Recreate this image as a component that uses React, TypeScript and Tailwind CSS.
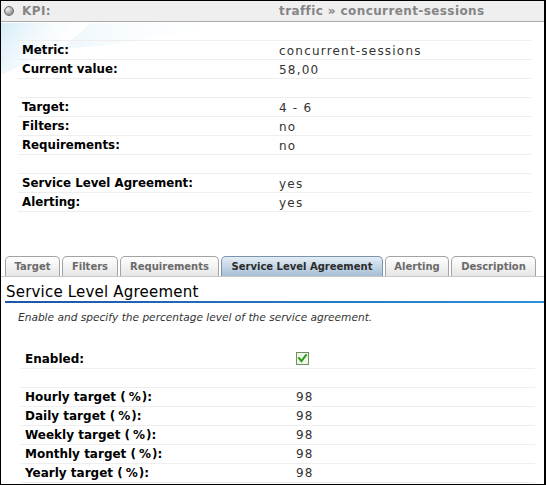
import React from "react";

const font = { fontFamily: '"DejaVu Sans", Verdana, sans-serif' };

const topRows: ([string, string] | null)[] = [
  ["Metric:", "concurrent-sessions"],
  ["Current value:", "58,00"],
  null,
  ["Target:", "4 - 6"],
  ["Filters:", "no"],
  ["Requirements:", "no"],
  null,
  ["Service Level Agreement:", "yes"],
  ["Alerting:", "yes"],
];

const tabs = [
  { label: "Target", w: "w-[55px]" },
  { label: "Filters", w: "w-[56px]" },
  { label: "Requirements", w: "w-[99px]" },
  { label: "Service Level Agreement", w: "w-[162px]", active: true },
  { label: "Alerting", w: "w-[64px]" },
  { label: "Description", w: "w-[85px]" },
];

const targets = ["Hourly", "Daily", "Weekly", "Monthly", "Yearly"];

function CheckIcon() {
  return (
    <svg width="13" height="13" viewBox="0 0 13 13">
      <rect x="0.5" y="0.5" width="12" height="12" fill="#eef6e8" stroke="#6f8f62" />
      <path d="M3 6.2 L5.4 9.2 L10 3.2" fill="none" stroke="#2f9a1a" strokeWidth="2" strokeLinecap="square" />
    </svg>
  );
}

export default function App() {
  return (
    <div
      className="relative w-[546px] h-[485px] overflow-hidden bg-white border border-black border-r-2 text-[12px] leading-none"
      style={font}
    >
      {/* decorative swoosh */}
      <svg className="absolute left-0 top-[22px] pointer-events-none" width="260" height="60" viewBox="0 0 260 60">
        <defs>
          <linearGradient id="sw" x1="0" y1="0" x2="1" y2="0.4">
            <stop offset="0" stopColor="#d6ecf8" />
            <stop offset="1" stopColor="#ffffff" stopOpacity="0" />
          </linearGradient>
          <linearGradient id="sw2" x1="0" y1="0" x2="1" y2="0">
            <stop offset="0" stopColor="#eef7fc" />
            <stop offset="1" stopColor="#ffffff" stopOpacity="0" />
          </linearGradient>
        </defs>
        <polygon points="90,0 240,0 110,22 60,26" fill="url(#sw2)" />
        <polygon points="0,0 88,0 60,24 0,52" fill="url(#sw)" />
      </svg>

      {/* header */}
      <div className="relative flex items-center h-[21px] bg-[#efefef] border-b border-[#a9a9a9] text-[#858585] font-bold">
        <div
          className="absolute left-[3px] top-[5px] w-[10px] h-[10px] rounded-full border border-[#6b6b6b]"
          style={{ background: "radial-gradient(circle at 35% 30%, #f4f4f4, #a8a8a8 55%, #7a7a7a)" }}
        />
        <div className="pl-[21px] w-[278px] tracking-[0.4px]">KPI:</div>
        <div className="tracking-[0.4px]">traffic » concurrent-sessions</div>
      </div>

      {/* summary rows */}
      <div className="relative ml-[17px] mt-[18px] w-[513px] border-t border-[#eeeeee]">
        {topRows.map((r, i) => (
          <div key={i} className="flex items-center pt-[1px] h-[19px] border-b border-[#eeeeee]">
            {r && (
              <>
                <div className="w-[261px] pl-[4px] font-bold text-black text-[11.8px]">{r[0]}</div>
                <div className="text-[#333] tracking-[1.2px]">{r[1]}</div>
              </>
            )}
          </div>
        ))}
      </div>

      {/* tabs */}
      <div className="flex items-end gap-[2px] pl-[4px] mt-[45px] h-[20px] border-b border-[#c8c8c8]">
        {tabs.map((t) => (
          <div
            key={t.label}
            className={
              t.active
                ? `${t.w} shrink-0 h-[20px] flex items-center justify-center overflow-hidden whitespace-nowrap rounded-t-[5px] border border-b-0 border-[#7b93ab] bg-gradient-to-b from-[#e4edf5] to-[#a6bed6] text-[10px] font-bold text-[#2b2b2b]`
                : `${t.w} shrink-0 h-[20px] flex items-center justify-center overflow-hidden whitespace-nowrap rounded-t-[5px] border border-b-0 border-[#a3a3a3] bg-gradient-to-b from-white to-[#e6e6e6] text-[10px] font-bold text-[#6a6a6a]`
            }
          >
            {t.label}
          </div>
        ))}
      </div>

      {/* section heading */}
      <div className="ml-[4px]">
        <div className="h-[24px] flex items-end pb-[1px] pl-[1px] text-[15px] tracking-[0.2px] text-black">Service Level Agreement</div>
        <div className="h-[2px] bg-gradient-to-r from-[#1d56a6] to-[#2d90d8]" />
      </div>

      <div className="ml-[17px] mt-[9px] text-[10.6px] italic text-[#333]">
        Enable and specify the percentage level of the service agreement.
      </div>

      <div className="ml-[20px] mt-[27px] w-[514px]">
        <div className="flex items-center h-[19px] border-b border-[#eeeeee]">
          <div className="w-[275px] pl-[4px] font-bold text-black">Enabled:</div>
          <CheckIcon />
        </div>
        <div className="h-[19px] border-b border-[#eeeeee]" />
        {targets.map((t) => (
          <div key={t} className="flex items-center h-[19px] border-b border-[#eeeeee]">
            <div className="w-[275px] pl-[4px] font-bold text-black">
              {t} target (<span className="pl-[3px] pr-[1px]">%</span>):
            </div>
            <div className="text-[#333] tracking-[1px]">98</div>
          </div>
        ))}
      </div>
    </div>
  );
}
